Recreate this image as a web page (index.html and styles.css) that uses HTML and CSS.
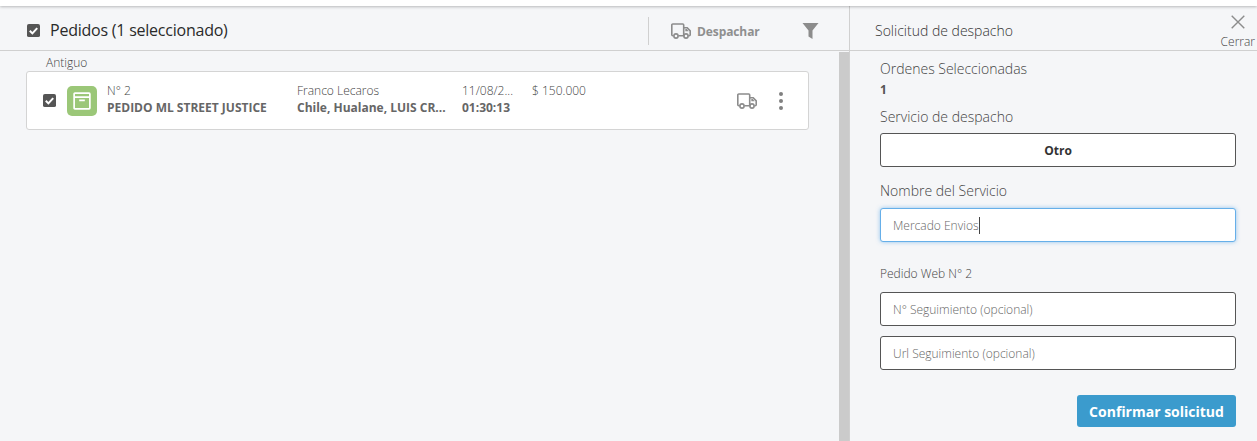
FILE: index.html
```html
<!DOCTYPE html>
<html lang="es">
<head>
<meta charset="utf-8">
<title>Pedidos</title>
<link rel="stylesheet" href="styles.css">
</head>
<body>
<svg class="defs" width="0" height="0">
  <symbol id="truck" viewBox="0 0 20 16">
    <path d="M2.600 12.800H1.800a1 1 0 0 1-1-1V2a1 1 0 0 1 1-1h9.900a1 1 0 0 1 1 1v10.800H7.400M12.700 4.700h3.500l3 3.200v3.900a1 1 0 0 1-1 1h-.8" fill="none" stroke="currentColor" stroke-width="1.600"/>
    <path d="M14.300 6h1.500l1.900 2.200h-3.400z" fill="currentColor"/>
    <circle cx="5" cy="13" r="2.100" fill="none" stroke="currentColor" stroke-width="1.600"/>
    <circle cx="15" cy="13" r="2.100" fill="none" stroke="currentColor" stroke-width="1.600"/>
  </symbol>
  <symbol id="check" viewBox="0 0 14 14">
    <rect width="14" height="14" rx="2" fill="#555"/>
    <path d="M3 7.300l2.800 2.800L11 4.500" fill="none" stroke="#fff" stroke-width="2.200"/>
  </symbol>
</svg>
<div class="topbar"></div>
<main class="app">
  <section class="left">
    <header class="head">
      <svg class="check-head"><use href="#check"/></svg>
      <h1 class="title">Pedidos (1 seleccionado)</h1>
      <div class="actions">
        <div class="dispatch">
          <svg class="truck-head"><use href="#truck"/></svg>
          <span>Despachar</span>
        </div>
        <svg class="filter" viewBox="0 0 16 16"><path d="M0 0h16L10 7.500V16L6 13.500V7.500z" fill="#8c8c8c"/></svg>
      </div>
    </header>
    <div class="body">
      <div class="list">
        <div class="group-label">Antiguo</div>
        <article class="card">
          <svg class="check-row"><use href="#check"/></svg>
          <div class="badge">
            <svg viewBox="0 0 16 16" class="box"><path d="M1.700 1h12.600a.7.7 0 0 1 .7.700v12.600a.7.7 0 0 1-.7.7H1.700a.7.7 0 0 1-.7-.7V1.700A.7.7 0 0 1 1.700 1zM1 4.500h14M5.500 7.500h5" fill="none" stroke="#fff" stroke-width="1.500"/></svg>
          </div>
          <div class="col col-name"><span>N° 2</span><strong>PEDIDO ML STREET JUSTICE</strong></div>
          <div class="col col-client"><span>Franco Lecaros</span><strong>Chile, Hualane, LUIS CR...</strong></div>
          <div class="col col-date"><span>11/08/2...</span><strong>01:30:13</strong></div>
          <div class="col col-price"><span>$ 150.000</span></div>
          <div class="row-actions">
            <svg class="truck-row"><use href="#truck"/></svg>
            <div class="dots"><i></i><i></i><i></i></div>
          </div>
        </article>
      </div>
      <div class="scrollbar"></div>
    </div>
  </section>
  <aside class="right">
    <header class="head-right">
      <h2 class="panel-title">Solicitud de despacho</h2>
      <div class="close">
        <svg viewBox="0 0 14 14" class="close-x"><path d="M.7.700l12.600 12.600M13.300.700L.7 13.300" stroke="#8c8c8c" stroke-width="1.400" fill="none"/></svg>
        <span>Cerrar</span>
      </div>
    </header>
    <div class="form">
      <div class="label">Ordenes Seleccionadas</div>
      <div class="count">1</div>
      <div class="label service-label">Servicio de despacho</div>
      <button class="select" type="button">Otro</button>
      <div class="label name-label">Nombre del Servicio</div>
      <div class="field focused">Mercado Envios<span class="caret"></span></div>
      <div class="web-label">Pedido Web N° 2</div>
      <div class="field">N° Seguimiento (opcional)</div>
      <div class="field second">Url Seguimiento (opcional)</div>
      <div class="submit-row"><button class="submit" type="button">Confirmar solicitud</button></div>
    </div>
  </aside>
</main>
</body>
</html>
```
FILE: styles.css
```css
* { box-sizing: border-box; }
html, body { margin: 0; padding: 0; }
body {
  width: 1257px;
  height: 441px;
  overflow: hidden;
  background: #f5f6f8;
  font-family: "Open Sans", sans-serif;
  font-weight: 300;
  color: #444;
}
.defs { display: block; height: 0; }
.topbar {
  height: 6px;
  background: #fff;
  box-shadow: 0 1px 3px rgba(0,0,0,.25);
  position: relative;
}
.app { display: flex; height: 435px; }
.left { width: 849px; display: flex; flex-direction: column; }
.head {
  height: 45px;
  flex: none;
  display: flex;
  align-items: center;
  padding-left: 27px;
  padding-top: 4px;
  border-bottom: 1px solid #d0d0d0;
}
.check-head { width: 13px; height: 13px; flex: none; }
.title { margin: 0 0 0 10px; font-size: 16px; font-weight: 400; color: #2a2a2a; letter-spacing: -.23px; white-space: nowrap; }
.actions { margin-left: auto; display: flex; align-items: center; height: 28px; margin-top: 2px; }
.dispatch {
  width: 154px;
  height: 28px;
  border-left: 1px solid #d0d0d0;
  display: flex;
  align-items: center;
  padding-left: 22px;
  font-size: 12px;
  font-weight: 700;
  letter-spacing: -.1px;
  color: #8f8f8f;
}
.truck-head { width: 20px; height: 16px; margin-right: 6px; color: #8c8c8c; }
.filter { width: 17px; height: 16px; margin-right: 30px; }
.body { flex: 1; display: flex; min-height: 0; }
.list { flex: 1; padding: 4px 30px 0 26px; }
.group-label { font-size: 12px; line-height: 16px; padding-left: 20px; height: 16px; }
.card {
  height: 59px;
  background: #fff;
  border: 1px solid #d4d4d4;
  border-radius: 3px;
  display: flex;
  align-items: center;
  padding-left: 16px;
  font-size: 12px;
}
.check-row { width: 13px; height: 13px; flex: none; }
.badge {
  width: 30px;
  height: 30px;
  margin-left: 11px;
  border-radius: 5px;
  background: #9bc778;
  display: flex;
  align-items: center;
  justify-content: center;
  flex: none;
}
.box { width: 18px; height: 18px; }
.col { display: flex; flex-direction: column; line-height: 17px; flex: none; margin-bottom: 4px; white-space: nowrap; }
.col strong { font-weight: 700; color: #666; }
.col-name { width: 190px; margin-left: 10px; }
.col-client { width: 150px; }
.col-date { width: 70px; margin-left: 15px; }
.col-price { align-self: flex-start; margin-top: 10px; }
.row-actions { margin-left: auto; display: flex; align-items: center; padding-right: 25px; }
.truck-row { width: 20px; height: 16px; color: #8c8c8c; }
.dots { margin-left: 22px; width: 4px; display: flex; flex-direction: column; gap: 3px; }
.dots i { width: 4px; height: 4px; border-radius: 50%; background: #808080; display: block; }
.scrollbar { width: 10px; flex: none; margin-top: 1px; background: #cbcbcb; }
.right { flex: 1; border-left: 1px solid #d0d0d0; min-width: 0; }
.head-right {
  height: 45px;
  display: flex;
  align-items: center;
  padding-left: 25px;
  padding-top: 4px;
  border-bottom: 1px solid #d0d0d0;
}
.panel-title { margin: 0; font-size: 14px; font-weight: 300; color: #333; }
.close {
  margin-left: auto;
  margin-right: 2px;
  display: flex;
  flex-direction: column;
  align-items: center;
  font-size: 12px;
  line-height: 14px;
  color: #444;
  align-self: flex-start;
  padding-top: 5px;
}
.close-x { width: 14px; height: 14px; margin-bottom: 6px; }
.form { padding: 8px 21px 0 30px; }
.label { font-size: 14px; line-height: 19px; color: #444; }
.count { font-size: 12px; font-weight: 700; line-height: 16px; margin-top: 4px; color: #555; }
.service-label { margin-top: 9px; }
.select {
  display: block;
  width: 100%;
  height: 34px;
  margin-top: 7px;
  background: #fff;
  border: 1px solid #555;
  border-radius: 3px;
  font: 700 12px "Open Sans", sans-serif;
  color: #333;
}
.name-label { margin-top: 14px; }
.field {
  height: 34px;
  background: #fff;
  border: 1px solid #555;
  border-radius: 3px;
  padding-left: 12px;
  display: flex;
  align-items: center;
  font-size: 12px;
  color: #666;
}
.name-label + .field { margin-top: 8px; }
.focused { border-color: #66afe9; box-shadow: 0 0 4px rgba(102,175,233,.7); }
.caret { width: 1px; height: 17px; background: #444; }
.web-label { font-size: 12px; line-height: 16px; margin-top: 24px; margin-bottom: 10px; }
.second { margin-top: 10px; }
.submit-row { display: flex; justify-content: flex-end; margin-top: 25px; }
.submit {
  width: 159px;
  height: 32px;
  background: #3b9bcd;
  border: 0;
  border-radius: 3px;
  color: #fff;
  font: 700 14px "Open Sans", sans-serif;
  padding: 0;
}
```
